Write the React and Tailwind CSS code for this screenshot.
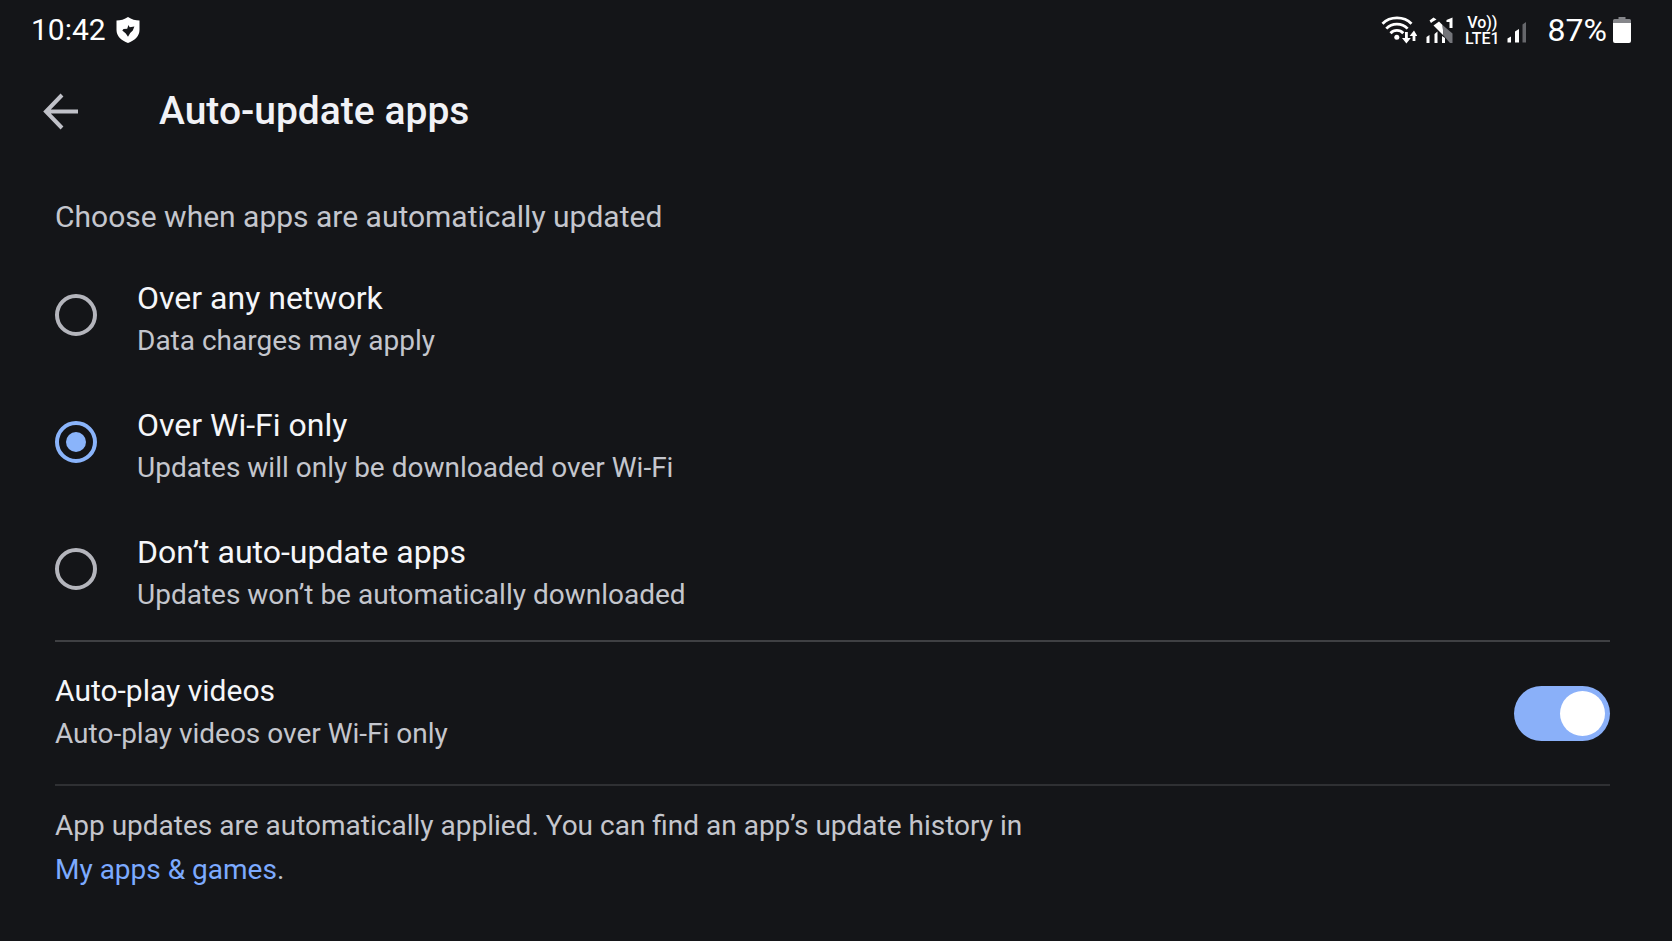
import { useState } from "react";

const options = [
  { id: "any", title: "Over any network", detail: "Data charges may apply" },
  { id: "wifi", title: "Over Wi-Fi only", detail: "Updates will only be downloaded over Wi-Fi" },
  { id: "never", title: "Don’t auto-update apps", detail: "Updates won’t be automatically downloaded" },
];

function ShieldIcon() {
  return (
    <svg width="24" height="28" viewBox="0 0 24 28" aria-hidden="true">
      <path
        d="M12 1C8.500 3.400 4.500 4.500 .5 4.600V14C.5 20.300 5.500 24.600 12 27C18.500 24.600 23.500 20.300 23.500 14V4.600C19.500 4.500 15.500 3.400 12 1Z"
        fill="#fff"
      />
      <path
        d="M12.400 9L13.700 11.200L18.400 10.600L16.800 14.500L14.200 17L12 20.800L9.800 17.600L6.300 14.600L7.500 13L11.200 12.800Z"
        fill="#17181b"
      />
    </svg>
  );
}

function WifiIcon() {
  return (
    <svg width="36" height="30" viewBox="0 0 36 30" fill="none" aria-hidden="true">
      <g stroke="#fff" strokeWidth="2.800">
        <path d="M1.500 8.800C9 .9 23 .9 30.500 8.800" />
        <path d="M5.300 13.600C11 7.500 20.800 7.500 26.600 13.600" />
        <path d="M9.500 18.200C13 14.400 18.800 14.400 22.300 18.200" />
      </g>
      <circle cx="15.800" cy="22.300" r="2.500" fill="#fff" />
      <path d="M24 17H26.800V23H29.800L25.400 28.500L21 23H24Z" fill="#fff" />
      <path d="M31.600 26V21H28.600L33 15.500L36 20.500V21H34.400V26Z" fill="#fff" />
    </svg>
  );
}

function NoSignalIcon() {
  return (
    <svg width="28" height="28" viewBox="0 0 28 28" aria-hidden="true">
      <path d="M.5 21L3.500 19V27H.5ZM8.500 18L11.500 15.500V27H8.500ZM16 20L19 22V27H16Z" fill="#fff" />
      <path d="M3.500 4.500L7.500 1.500L10.500 3.500L7 5.500L5 7ZM20.500 4L26.500 1.500V12H23.500V6H20.500Z" fill="#fff" />
      <path d="M7.500 9.500L13 5.500L16.500 9L17.500 19.500Z" fill="#fff" />
      <path d="M16.500 9L26.500 17.500V27H24L17.500 19.500Z" fill="#74757a" />
    </svg>
  );
}

function SignalIcon() {
  return (
    <svg width="20" height="24" viewBox="0 0 20 24" aria-hidden="true">
      <path d="M.5 18.500L4 16.500V22.500H.5Z" fill="#fff" />
      <path d="M8 11.500L12 9V22.500H8Z" fill="#fff" />
      <path d="M15.500 4.500L19 2V22.500H15.500Z" fill="#66676b" />
    </svg>
  );
}

function BatteryIcon() {
  return (
    <svg width="18" height="28" viewBox="0 0 18 28" aria-hidden="true">
      <path d="M5.500 1H12.500V3H16.500Q18 3 18 4.500V8H0V4.500Q0 3 1.500 3H5.500Z" fill="#85868a" />
      <path d="M0 7H18V25Q18 27 16 27H2Q0 27 0 25Z" fill="#fff" />
    </svg>
  );
}

function StatusBar() {
  return (
    <div className="flex h-15 items-center justify-between pl-[31px] pr-[41px] text-white">
      <div className="flex items-center gap-2.5">
        <span className="text-[30px] leading-9">10:42</span>
        <ShieldIcon />
      </div>
      <div className="flex items-center">
        <WifiIcon />
        <span className="ml-[9px] mr-[11px]">
          <NoSignalIcon />
        </span>
        <span className="flex flex-col items-center pt-0.5 text-base font-medium leading-4">
          <span>Vo))</span>
          <span>LTE1</span>
        </span>
        <span className="ml-[7px] mt-1">
          <SignalIcon />
        </span>
        <span className="ml-[21px] mr-1.5 text-[32px] leading-9">87%</span>
        <BatteryIcon />
      </div>
    </div>
  );
}

export default function App() {
  const [mode, setMode] = useState("wifi");
  const [autoPlay, setAutoPlay] = useState(true);

  return (
    <div className="min-h-screen bg-[#141518] font-[Roboto,sans-serif] text-[#c4c6cd]">
      <StatusBar />

      <header className="flex h-[102px] items-center gap-[79px] pl-[42px]">
        <button type="button" aria-label="Back" className="cursor-pointer">
          <svg width="38" height="38" viewBox="0 0 38 38" fill="none" stroke="#c0c1c8" strokeWidth="4">
            <path d="M36 19.500H4.500M20 3L4 19.500L20 36" />
          </svg>
        </button>
        <h1 className="text-[39px] font-medium leading-[44px] text-[#f1f2f6]">Auto-update apps</h1>
      </header>

      <main className="pt-[34px] pr-[62px] pl-[55px]">
        <fieldset>
          <legend className="text-[30px] leading-[42px]">Choose when apps are automatically updated</legend>
          <div className="flex flex-col gap-[41px] pt-[39px] pb-[23px]">
            {options.map((o) => (
              <label key={o.id} className="flex cursor-pointer items-start gap-10">
                <input
                  type="radio"
                  name="auto-update"
                  value={o.id}
                  checked={mode === o.id}
                  onChange={() => setMode(o.id)}
                  className="mt-[17px] grid size-[42px] shrink-0 appearance-none place-content-center rounded-full border-4 border-[#b4b5bc] before:size-5 before:rounded-full checked:border-[#8ab4fb] checked:before:bg-[#8ab4fb]"
                />
                <span className="flex flex-col">
                  <span className="text-[32px] leading-[42px] text-[#f5f6f9]">{o.title}</span>
                  <span className="text-[28px] leading-[44px]">{o.detail}</span>
                </span>
              </label>
            ))}
          </div>
        </fieldset>

        <label className="flex cursor-pointer items-center justify-between border-y-2 border-t-[#3f4043] border-b-[#2f3033] py-7">
          <span className="flex flex-col">
            <span className="text-[30px] leading-[42px] text-[#f5f6f9]">Auto-play videos</span>
            <span className="text-[28px] leading-[44px]">Auto-play videos over Wi-Fi only</span>
          </span>
          <input
            type="checkbox"
            role="switch"
            checked={autoPlay}
            onChange={(e) => setAutoPlay(e.target.checked)}
            className="flex h-[55px] w-24 shrink-0 appearance-none items-center rounded-full bg-[#5f6166] px-[5px] before:size-[45px] before:rounded-full before:bg-white checked:justify-end checked:bg-[#8ab0f9]"
          />
        </label>

        <p className="pt-[18px] text-[28px] leading-[44px]">
          App updates are automatically applied. You can find an app’s update history in
          <br />
          <a href="#my-apps" className="text-[#7caaff]">
            My apps &amp; games
          </a>
          .
        </p>
      </main>
    </div>
  );
}
